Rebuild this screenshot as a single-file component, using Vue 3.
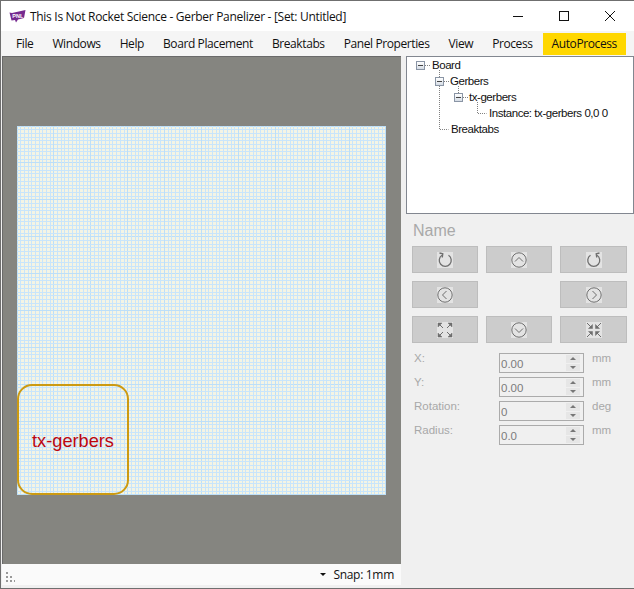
<script setup>
const menus = ["File", "Windows", "Help", "Board Placement", "Breaktabs", "Panel Properties", "View", "Process"];

const nudges = [
  { icon: "cw" },
  { icon: "up" },
  { icon: "ccw" },
  { icon: "left" },
  { icon: "" },
  { icon: "right" },
  { icon: "grow" },
  { icon: "down" },
  { icon: "shrink" },
];

const fields = [
  { label: "X:", value: "0.00", unit: "mm" },
  { label: "Y:", value: "0.00", unit: "mm" },
  { label: "Rotation:", value: "0", unit: "deg" },
  { label: "Radius:", value: "0.0", unit: "mm" },
];

const chevrons = {
  up: "M4 9.500 8 5.500l4 4",
  down: "M4 6.500 8 10.500l4-4",
  left: "M9.500 4 5.500 8l4 4",
  right: "M6.500 4 10.500 8l-4 4",
};

// 1mm grid, 100 cells on the board, lines snapped to whole pixels
const gridLines = Array.from({ length: 101 }, (_, i) => ({
  pos: Math.min(Math.floor(i * 3.69), 368) + 0.5,
  major: i % 10 === 0,
}));
</script>

<template>
  <div class="window">
    <header class="titlebar">
      <svg class="logo" width="17" height="13" viewBox="0 0 17 13">
        <path d="M0.500 2.500 3 3 16.500 0 15 8 9 9.500 7 12.500 6 10 2.500 10.500z" fill="#76298f" />
        <text x="3.300" y="7.800" class="logo-text">PNL</text>
      </svg>
      <span class="title">This Is Not Rocket Science - Gerber Panelizer - [Set: Untitled]</span>
      <div class="controls">
        <svg width="10" height="10" viewBox="0 0 10 10"><path d="M0 5.500h10" stroke="#111" fill="none" /></svg>
        <svg width="10" height="10" viewBox="0 0 10 10"><rect x="0.500" y="0.500" width="9" height="9" stroke="#111" fill="none" /></svg>
        <svg width="10" height="10" viewBox="0 0 10 10"><path d="M0 0l10 10M10 0 0 10" stroke="#111" fill="none" /></svg>
      </div>
    </header>

    <nav class="menubar">
      <span v-for="m in menus" :key="m" class="menu-item">{{ m }}</span>
      <span class="menu-item auto">AutoProcess</span>
    </nav>

    <div class="body">
      <div class="left">
        <main class="canvas">
          <div class="board">
            <svg class="grid" width="369" height="369" viewBox="0 0 369 369" shape-rendering="crispEdges">
              <template v-for="l in gridLines" :key="l.pos">
                <path :d="`M${l.pos} 0V369M0 ${l.pos}H369`" :stroke="l.major ? '#bcdff9' : '#c8e5fb'" fill="none" />
              </template>
            </svg>
            <div class="piece">tx-gerbers</div>
          </div>
        </main>
        <footer class="statusbar">
          <svg class="grip" width="10" height="10" viewBox="0 0 10 10" fill="#999">
            <rect x="0" y="0" width="2" height="2" />
            <rect x="0" y="4" width="2" height="2" />
            <rect x="4" y="4" width="2" height="2" />
            <rect x="0" y="8" width="2" height="2" />
            <rect x="4" y="8" width="2" height="2" />
            <rect x="8" y="8" width="1" height="2" />
          </svg>
          <span class="caret"></span>
          <span class="snap">Snap: 1mm</span>
        </footer>
      </div>

      <aside class="side">
        <div class="tree">
          <svg class="tree-lines" width="227" height="156" viewBox="0 0 227 156">
            <path
              d="M19 8.500h6M33.500 13v7M38 24.500h5M33.500 29v43.500h9M52.500 29v7M57 40.500h5M71.500 45v11.500h9"
              stroke="#808080"
              stroke-dasharray="1 1"
              fill="none"
            />
          </svg>
          <div class="node n0"><span class="box"></span>Board</div>
          <div class="node n1"><span class="box"></span>Gerbers</div>
          <div class="node n2"><span class="box"></span>tx-gerbers</div>
          <div class="node n3">Instance: tx-gerbers 0,0 0</div>
          <div class="node n4">Breaktabs</div>
        </div>

        <div class="props">
          <div class="name">Name</div>
          <div class="nudge-grid">
            <template v-for="(b, i) in nudges" :key="i">
              <div v-if="!b.icon"></div>
              <button v-else type="button" class="nudge" disabled>
                <svg width="16" height="16" viewBox="0 0 16 16" fill="none" stroke="#6e6e6e" stroke-width="1">
                  <template v-if="chevrons[b.icon]">
                    <circle cx="8" cy="8" r="7.200" />
                    <path :d="chevrons[b.icon]" />
                  </template>
                  <template v-else-if="b.icon === 'cw'">
                    <path d="M5 3.300a6 6 0 1 0 6.500 0" stroke-width="1.300" />
                    <path d="M2.500 1 5.800 1.800 5.300 5.500" stroke-width="1.300" />
                  </template>
                  <template v-else-if="b.icon === 'ccw'">
                    <path d="M11 3.300a6 6 0 1 1-6.500 0" stroke-width="1.300" />
                    <path d="M13.500 1 10.200 1.800 10.700 5.500" stroke-width="1.300" />
                  </template>
                  <template v-else-if="b.icon === 'grow'">
                    <path d="M1 5V1h4L1 5M15 5V1h-4l4 4M1 11v4h4l-4-4M15 11v4h-4l4-4" fill="#6e6e6e" stroke-width="0.500" />
                    <path d="M3 3l3 3M13 3l-3 3M3 13l3-3M13 13l-3-3" />
                  </template>
                  <template v-else>
                    <path d="M6.500 2.500v4h-4l4-4M9.500 2.500v4h4l-4-4M6.500 13.500v-4h-4l4 4M9.500 13.500v-4h4l-4 4" fill="#6e6e6e" stroke-width="0.500" />
                    <path d="M1 1l4 4M15 1l-4 4M1 15l4-4M15 15l-4-4" />
                  </template>
                </svg>
              </button>
            </template>
          </div>

          <div class="fields">
            <div v-for="f in fields" :key="f.label" class="field">
              <label class="field-label">{{ f.label }}</label>
              <div class="spinner">
                <span class="spinner-value">{{ f.value }}</span>
                <span class="spinner-btns">
                  <i class="spin up"></i>
                  <i class="spin down"></i>
                </span>
              </div>
              <span class="field-unit">{{ f.unit }}</span>
            </div>
          </div>
        </div>
      </aside>
    </div>
  </div>
</template>

<style scoped>
.window {
  width: 634px;
  height: 589px;
  box-sizing: border-box;
  border: 1px solid #6f6f6f;
  border-right-width: 0;
  display: flex;
  flex-direction: column;
  background: #f0f0f0;
  font-family: "Open Sans", "Liberation Sans", sans-serif;
  font-size: 12px;
  color: #111;
  overflow: hidden;
}
.titlebar {
  height: 30px;
  flex-shrink: 0;
  background: #fff;
  display: flex;
  align-items: center;
  padding-left: 8px;
}
.logo {
  margin-right: 4px;
}
.logo-text {
  font-family: "Liberation Sans", sans-serif;
  font-size: 5.500px;
  font-weight: 700;
  fill: #fff;
}
.title {
  flex: 1;
  white-space: nowrap;
  letter-spacing: -0.300px;
}
.controls {
  display: flex;
  gap: 36px;
  padding-right: 19px;
  margin-top: -1px;
}
.menubar {
  height: 25px;
  flex-shrink: 0;
  background: #f5f5f5;
  display: flex;
  padding: 2px 0 1px 6px;
  box-sizing: border-box;
  gap: 1px;
}
.menu-item {
  padding: 0 9px;
  line-height: 22px;
  white-space: nowrap;
  letter-spacing: -0.400px;
}
.auto {
  background: #ffd700;
}
.body {
  flex: 1;
  display: flex;
  min-height: 0;
}
.left {
  width: 400px;
  flex-shrink: 0;
  display: flex;
  flex-direction: column;
  padding-left: 1px;
  box-sizing: border-box;
}
.canvas {
  flex: 1;
  background: #858580;
  border-top: 1px solid #6a6a6a;
  border-left: 1px solid #6a6a6a;
  padding: 69px 0 0 14px;
  min-height: 0;
}
.board {
  width: 369px;
  height: 369px;
  position: relative;
  background-color: #f4f4e4;
}
.grid {
  display: block;
}
.piece {
  position: absolute;
  left: 0;
  bottom: 0;
  width: 112px;
  height: 111px;
  box-sizing: border-box;
  border: 2px solid #cc9a12;
  border-radius: 15px;
  padding-top: 3px;
  display: flex;
  align-items: center;
  justify-content: center;
  font-family: "Liberation Sans", sans-serif;
  font-size: 18.200px;
  color: #bb0510;
}
.statusbar {
  height: 21px;
  flex-shrink: 0;
  background: #fafafa;
  display: flex;
  align-items: center;
  padding: 0 7px 0 4px;
  margin-bottom: 3px;
}
.grip {
  margin-top: 5px;
}
.caret {
  margin-left: auto;
  margin-right: 7px;
  border-left: 3px solid transparent;
  border-right: 3px solid transparent;
  border-top: 3px solid #111;
}
.snap {
  letter-spacing: -0.300px;
}
.side {
  flex: 1;
  display: flex;
  flex-direction: column;
  padding-left: 5px;
  min-width: 0;
}
.tree {
  position: relative;
  height: 158px;
  box-sizing: border-box;
  border: 1px solid #828790;
  background: #fff;
  flex-shrink: 0;
  font-family: "Liberation Sans", sans-serif;
  font-size: 11.500px;
  letter-spacing: -0.450px;
}
.tree-lines {
  position: absolute;
  left: -1px;
  top: 0;
}
.node {
  position: relative;
  height: 16px;
  line-height: 16px;
  white-space: nowrap;
}
.box {
  position: absolute;
  top: 4px;
  width: 9px;
  height: 9px;
  box-sizing: border-box;
  border: 1px solid #8a95a5;
  background: linear-gradient(#fff, #d5dce5);
}
.box::after {
  content: "";
  position: absolute;
  left: 1px;
  right: 1px;
  top: 3px;
  height: 1px;
  background: #444;
}
.n0 {
  padding-left: 25px;
}
.n0 .box {
  left: 9px;
}
.n1 {
  padding-left: 43px;
}
.n1 .box {
  left: 28px;
}
.n2 {
  padding-left: 62px;
}
.n2 .box {
  left: 47px;
}
.n3 {
  padding-left: 82px;
}
.n4 {
  padding-left: 44px;
}
.props {
  padding: 7px 7px 0 6px;
  color: #a8a8a8;
}
.name {
  font-family: "Liberation Sans", sans-serif;
  font-size: 16px;
  line-height: 18px;
  margin: 1px 0 6px 1px;
  color: #a9a9a9;
}
.nudge-grid {
  display: grid;
  grid-template-columns: 66px 66px 67px;
  grid-auto-rows: 27px;
  column-gap: 8px;
  row-gap: 8px;
}
.nudge {
  padding: 0;
  margin: 0;
  border: 1px solid #bdbdbd;
  background: #cccccc;
  display: flex;
  align-items: center;
  justify-content: center;
}
.nudge svg {
  background: #e3e3e3;
}
.fields {
  margin-top: 10px;
  display: flex;
  flex-direction: column;
  gap: 4px;
  font-family: "Liberation Sans", sans-serif;
  font-size: 11.500px;
}
.field {
  display: grid;
  grid-template-columns: 87px 85px auto;
  height: 20px;
}
.field-label {
  padding-left: 2px;
  line-height: 11px;
}
.field-unit {
  padding-left: 8px;
  line-height: 11px;
}
.spinner {
  box-sizing: border-box;
  height: 20px;
  border: 1px solid #ababab;
  display: flex;
  align-items: center;
  justify-content: space-between;
  padding: 0 3px 0 1px;
  font-size: 11.500px;
  color: #7c7c7c;
}
.spinner-value {
  padding-top: 1px;
}
.spinner-btns {
  width: 14px;
  height: 16px;
  display: flex;
  flex-direction: column;
  gap: 1px;
}
.spin {
  flex: 1;
  background: #e6e6e6;
  display: flex;
  align-items: center;
  justify-content: center;
}
.spin::after {
  content: "";
  border-left: 3px solid transparent;
  border-right: 3px solid transparent;
}
.up::after {
  border-bottom: 3px solid #777;
}
.down::after {
  border-top: 3px solid #777;
}
</style>

<style>
html,
body {
  margin: 0;
  background: #f0f0f0;
}
</style>
